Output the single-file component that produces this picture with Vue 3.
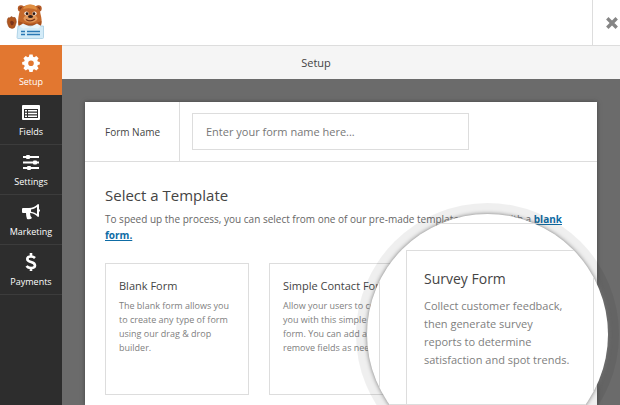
<script setup>
import { ref } from 'vue'

const formName = ref('')
const nav = [
  { label: 'Setup', icon: 'gear' },
  { label: 'Fields', icon: 'list' },
  { label: 'Settings', icon: 'sliders' },
  { label: 'Marketing', icon: 'horn' },
  { label: 'Payments', icon: 'dollar' },
]
const active = ref('Setup')
const templates = [
  { title: 'Blank Form', lines: ['The blank form allows you', 'to create any type of form', 'using our drag & drop', 'builder.'] },
  { title: 'Simple Contact Form', lines: ['Allow your users to contact', 'you with this simple contact', 'form. You can add and', 'remove fields as needed.'] },
]
const survey = ['Collect customer feedback,', 'then generate survey', 'reports to determine', 'satisfaction and spot trends.']
</script>

<template>
  <div class="builder">
    <header class="topbar">
      <div class="brand">
        <svg class="logo" width="40" height="40" viewBox="0 0 40 40" role="img" aria-label="Bear mascot holding a form">
          <circle cx="15" cy="7.500" r="3.200" fill="#b35a26" />
          <circle cx="32.500" cy="7.500" r="3.200" fill="#b35a26" />
          <circle cx="15" cy="7.500" r="1.400" fill="#7d3b1c" />
          <circle cx="32.500" cy="7.500" r="1.400" fill="#7d3b1c" />
          <path d="M12.500 24Q11.500 20 13 13Q14 6 20 4.500Q24 3 28 4.500Q34 6 34.500 13Q36.500 20 35 24Q24 28 12.500 24Z" fill="#c4682b" />
          <path d="M17 8Q19 3 25 3.500Q31 4 31 9Q24 6 17 8Z" fill="#e08f42" />
          <path d="M12.500 20Q24 26 35.500 20L35 25H12.500Z" fill="#a9521f" />
          <ellipse cx="24.500" cy="17.500" rx="7" ry="4" fill="#e2985a" />
          <ellipse cx="20.500" cy="12.500" rx="2.200" ry="1.900" fill="#fff4e8" />
          <ellipse cx="28.500" cy="12.500" rx="2.200" ry="1.900" fill="#fff4e8" />
          <circle cx="21" cy="12.700" r="1.400" fill="#2b1510" />
          <circle cx="28" cy="12.700" r="1.400" fill="#2b1510" />
          <ellipse cx="24.500" cy="15.500" rx="2.500" ry="1.500" fill="#34201c" />
          <path d="M20 18.500Q24.500 21.500 29 18" fill="none" stroke="#7a3518" stroke-width="1.200" />
          <path d="M12 25H37.500V36.500Q37.500 37.500 36.500 37.500H12Q11 37.500 11 36.500Z" fill="#d3ebf8" stroke="#a3cce2" stroke-width=".8" />
          <path d="M13 25L17 22.500L24.500 26L31 22.500L35 25L32 27.500L24.500 26.500L17 27.500Z" fill="#eaf4f9" />
          <path d="M15 30.500H19M21 30.500H34M15 33.500H19M21 33.500H34" stroke="#2b78b4" stroke-width="1.600" />
          <path d="M1.500 18Q2.500 15.500 4 17Q5 14.500 7 16.500Q9.500 15.500 10 18.500Q11 21 9.500 24Q9 27.500 6 27.500Q2.500 27 2 24Q.5 21 1.500 18Z" fill="#b0571f" stroke="#8a421f" stroke-width=".5" />
          <path d="M4 21Q6 18.500 8 21.500Q7.500 25 5 24Z" fill="#7b351c" />
        </svg>
      </div>
      <button class="close" type="button" aria-label="Close">
        <svg width="12" height="12" viewBox="0 0 12 12"><path d="M2.500 2.500L9.500 9.500M9.500 2.500L2.500 9.500" stroke="#858585" stroke-width="3.400" stroke-linecap="square" /></svg>
      </button>
    </header>

    <div class="workspace">
      <nav class="sidebar">
        <button v-for="item in nav" :key="item.label" type="button" :class="['nav-item', { active: active === item.label }]" @click="active = item.label">
          <svg class="nav-icon" width="20" height="20" viewBox="0 0 20 20" fill="#fff" aria-hidden="true">
            <template v-if="item.icon === 'gear'">
              <path fill-rule="evenodd" d="M8.400 2.500h3.200l.5 2.300 1.200.5 2-1.300 2.300 2.300-1.300 2 .5 1.200 2 .4v2.700l-2 .4-.5 1.200 1.300 2-2.300 2.300-2-1.300-1.200.5-.5 2.200H8.400l-.5-2.200-1.200-.5-2 1.300-2.300-2.300 1.300-2-.5-1.200-2-.4V9.900l2-.4.5-1.200-1.300-2L4.700 4l2 1.300 1.200-.5ZM10 8.400a2.800 2.800 0 1 0 0 5.600a2.800 2.800 0 1 0 0-5.600Z" />
            </template>
            <template v-else-if="item.icon === 'list'">
              <path fill-rule="evenodd" d="M2 3h16q1 0 1 1v13q0 1-1 1H2q-1 0-1-1V4q0-1 1-1ZM3 7v9h14V7Z" />
              <path d="M4 8h2v1.500H4ZM7 8h9v1.500H7ZM4 10.750h2v1.500H4ZM7 10.750h9v1.500H7ZM4 13.500h2V15H4ZM7 13.500h9V15H7Z" />
            </template>
            <template v-else-if="item.icon === 'sliders'">
              <path d="M2 4h16v2H2ZM2 9.500h16v2H2ZM2 15h16v2H2Z" />
              <rect x="5" y="3" width="4" height="4" rx="1" /><rect x="12" y="8.500" width="4" height="4" rx="1" /><rect x="6" y="14" width="4" height="4" rx="1" />
            </template>
            <template v-else-if="item.icon === 'horn'">
              <path fill-rule="evenodd" d="M17 2q1 0 1 1v4q2 1.500 0 3v4q0 1-1 1-4-4-8-4 0 3 2 5-2 2-5 1-1-3-1-6H2q-1 0-1-1V7q0-1 1-1h6q5 0 9-4ZM16 5q-3 2-6 2.500v2.200q3 .3 6 2.300Z" />
            </template>
            <path v-else fill="none" stroke="#fff" stroke-width="2.600" d="M14 6Q12.500 4.500 10 4.500Q6.300 4.500 6.300 7Q6.300 9 10 10Q14 11 14 13.500Q14 16 10 16Q7 16 5.500 14M10 1V5M10 15.500V19" />
          </svg>
          <span>{{ item.label }}</span>
        </button>
      </nav>

      <main class="content">
        <h1 class="page-title">Setup</h1>
        <div class="canvas">
          <section class="panel">
            <div class="name-row">
              <label for="form-name">Form Name</label>
              <div class="name-field"><input id="form-name" v-model="formName" type="text" placeholder="Enter your form name here..." /></div>
            </div>
            <div class="select-area">
              <h2>Select a Template</h2>
              <p class="intro">To speed up the process, you can select from one of our pre-made templates or start with a <a href="#blank">blank form.</a></p>
              <div class="cards">
                <article v-for="card in templates" :key="card.title" class="card">
                  <h3>{{ card.title }}</h3>
                  <p><span v-for="line in card.lines" :key="line">{{ line }}</span></p>
                </article>
              </div>
            </div>
          </section>
        </div>
      </main>
    </div>

    <aside class="lens">
      <div class="lens-outline">
        <article class="survey">
          <h3>Survey Form</h3>
          <p><span v-for="line in survey" :key="line">{{ line }}</span></p>
        </article>
      </div>
    </aside>
  </div>
</template>

<style>
body { margin: 0; }
</style>

<style scoped>
* { box-sizing: border-box; }
h1, h2, h3, p { margin: 0; font-weight: 400; }
button { font: inherit; border: 0; padding: 0; cursor: pointer; }
.builder { position: relative; display: flex; flex-direction: column; height: 100vh; overflow: hidden; background: #6b6b6b; font-family: "Open Sans", "Noto Sans", sans-serif; color: #444; }
.topbar { display: flex; flex: none; justify-content: space-between; height: 45px; background: #fff; }
.brand { padding: 1px 6px; }
.logo { display: block; }
.close { display: flex; align-items: center; justify-content: flex-end; width: 28px; padding-right: 2px; background: #fff; border-left: 1px solid #ddd; }
.close svg { flex: none; }
.workspace { display: flex; flex: 1; min-height: 0; }
.sidebar { display: flex; flex-direction: column; flex: none; width: 62px; background: #2d2d2d; }
.nav-item { display: flex; flex-direction: column; align-items: center; gap: 3px; height: 50px; padding-top: 7px; background: #2d2d2d; border-bottom: 1px solid #3c3c3c; color: #fff; font-size: 9px; line-height: 14px; }
.nav-item.active { background: #e27730; border-color: #e27730; }
.nav-icon { flex: none; }
.content { display: flex; flex-direction: column; flex: 1; min-width: 0; }
.page-title { flex: none; height: 34px; padding-right: 50px; border-top: 1px solid #ddd; background: #f5f5f5; text-align: center; font-size: 11px; line-height: 33px; }
.canvas { display: flex; flex: 1; min-height: 0; padding: 23px 23px 0; }
.panel { flex: 1; min-width: 0; background: #fff; box-shadow: 0 0 4px #444; }
.name-row { display: flex; height: 60px; border-bottom: 1px solid #ddd; }
.name-row label { flex: none; width: 95px; padding-left: 20px; border-right: 1px solid #ddd; font-size: 10px; line-height: 60px; }
.name-field { flex: 1; padding: 11px 128px 11px 12px; }
.name-field input { display: block; width: 100%; height: 37px; padding: 0 13px; border: 1px solid #ddd; border-radius: 0; font: inherit; font-size: 11px; outline: 0; color: #444; }
.name-field input::placeholder { color: #777; opacity: 1; }
.select-area { padding: 22px 20px; }
.select-area h2 { font-size: 15px; line-height: 22px; }
.intro { margin-top: 5px; color: #666; font-size: 10px; line-height: 16px; }
.intro a { color: #0e6ca5; font-weight: 700; }
.cards { display: grid; grid-template-columns: repeat(3, minmax(0, 1fr)); gap: 20px; margin-top: 20px; }
.card { height: 132px; padding: 13px; border: 1px solid #ddd; white-space: nowrap; }
.card h3 { font-size: 11px; line-height: 18px; }
.card p { margin-top: 4px; color: #808080; font-size: 9px; line-height: 14px; }
p span { display: block; }
.lens { position: absolute; left: 367px; top: 214px; width: 241px; height: 241px; overflow: hidden; border-radius: 50%; background: #fff; box-shadow: 0 0 4px #777, 0 0 0 11px #00000010; }
.lens-outline { height: 182px; margin: 9px 14px 0 12px; padding: 26px 0 0 26px; border: 1px solid #ddd; }
.survey { height: 154px; padding: 17px; border: 1px solid #ddd; border-width: 1px 0 0 1px; white-space: nowrap; }
.survey h3 { font-size: 14px; line-height: 22px; }
.survey p { margin-top: 7px; color: #808080; font-size: 11px; line-height: 18px; }
</style>
